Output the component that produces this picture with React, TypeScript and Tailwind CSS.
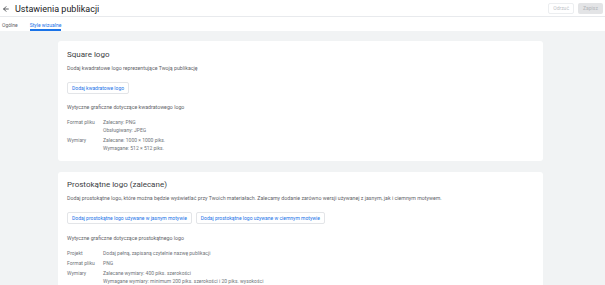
import { ArrowLeft } from "lucide-react";

const font = { fontFamily: "Roboto, 'Noto Sans', sans-serif" };

function Row({ label, values }: { label: string; values: string[] }) {
  return (
    <div className="flex text-[5px] leading-[8px] text-[#70757a]">
      <div className="w-[36px] shrink-0">{label}</div>
      <div className="flex flex-col">
        {values.map((v) => (
          <div key={v}>{v}</div>
        ))}
      </div>
    </div>
  );
}

function OutlineButton({ children }: { children: string }) {
  return (
    <button className="h-[12px] rounded-[2px] border border-[#e3e5e8] bg-white px-[4px] text-[5px] leading-[10px] text-[#1a73e8]">
      {children}
    </button>
  );
}

export default function App() {
  return (
    <div className="h-[285px] w-[605px] overflow-hidden bg-[#f1f3f4]" style={font}>
      <div className="bg-white">
        <div className="flex h-[17px] items-center justify-between border-b border-[#e8eaed] px-[2px]">
          <div className="flex items-center gap-[5px] pt-[1px]">
            <ArrowLeft className="h-[8px] w-[8px] text-[#3c4043]" strokeWidth={2.5} />
            <span className="text-[9px] leading-[12px] text-[#202124]">Ustawienia publikacji</span>
          </div>
          <div className="flex items-center gap-[4px]">
            <button className="h-[11px] rounded-[2px] border border-[#eceef0] bg-white px-[4px] text-[5px] leading-[9px] text-[#bdc1c6]">
              Odrzuć
            </button>
            <button className="h-[11px] w-[25px] rounded-[2px] bg-[#e3e4e6] text-[5px] leading-[11px] text-[#b3b6ba]">
              Zapisz
            </button>
          </div>
        </div>
        <div className="flex h-[14px] items-end gap-[12px] px-[2px] text-[5px] leading-[8px]">
          <div className="pb-[2px] text-[#5f6368]">Ogólne</div>
          <div className="border-b-[2px] border-[#1a73e8] text-[#1a73e8]">Style wizualne</div>
        </div>
      </div>

      <div className="flex w-[543px] flex-col gap-[11px] pl-[58px] pt-[10px]">
        <div className="flex flex-col items-start rounded-[3px] bg-white px-[9px] pb-[9px] pt-[9px]">
          <div className="text-[8px] leading-[10px] text-[#3c4043]">Square logo</div>
          <div className="mt-[4px] text-[5.25px] leading-[8px] text-[#5f6368]">
            Dodaj kwadratowe logo reprezentujące Twoją publikację
          </div>
          <div className="mt-[10px] flex">
            <OutlineButton>Dodaj kwadratowe logo</OutlineButton>
          </div>
          <div className="mt-[9px] text-[5.25px] leading-[8px] text-[#5f6368]">
            Wytyczne graficzne dotyczące kwadratowego logo
          </div>
          <div className="mt-[7px] flex flex-col gap-[2px]">
            <Row label="Format pliku" values={["Zalecany: PNG", "Obsługiwany: JPEG"]} />
            <Row label="Wymiary" values={["Zalecane: 1000 × 1000 piks.", "Wymagane: 512 × 512 piks."]} />
          </div>
        </div>

        <div className="flex flex-col items-start rounded-[3px] bg-white px-[9px] pb-[11px] pt-[8px]">
          <div className="text-[8px] leading-[10px] text-[#3c4043]">Prostokątne logo (zalecane)</div>
          <div className="mt-[4px] text-[5.25px] leading-[8px] text-[#5f6368]">
            Dodaj prostokątne logo, które można będzie wyświetlać przy Twoich materiałach. Zalecamy dodanie
            zarówno wersji używanej z jasnym, jak i ciemnym motywem.
          </div>
          <div className="mt-[10px] flex gap-[4px]">
            <OutlineButton>Dodaj prostokątne logo używane w jasnym motywie</OutlineButton>
            <OutlineButton>Dodaj prostokątne logo używane w ciemnym motywie</OutlineButton>
          </div>
          <div className="mt-[10px] text-[5.25px] leading-[8px] text-[#5f6368]">
            Wytyczne graficzne dotyczące prostokątnego logo
          </div>
          <div className="mt-[7px] flex flex-col gap-[2px]">
            <Row label="Projekt" values={["Dodaj pełną, zapisaną czytelnie nazwę publikacji"]} />
            <Row label="Format pliku" values={["PNG"]} />
            <Row
              label="Wymiary"
              values={[
                "Zalecane wymiary: 400 piks. szerokości",
                "Wymagane wymiary: minimum 200 piks. szerokości i 20 piks. wysokości",
              ]}
            />
          </div>
        </div>
      </div>
    </div>
  );
}
